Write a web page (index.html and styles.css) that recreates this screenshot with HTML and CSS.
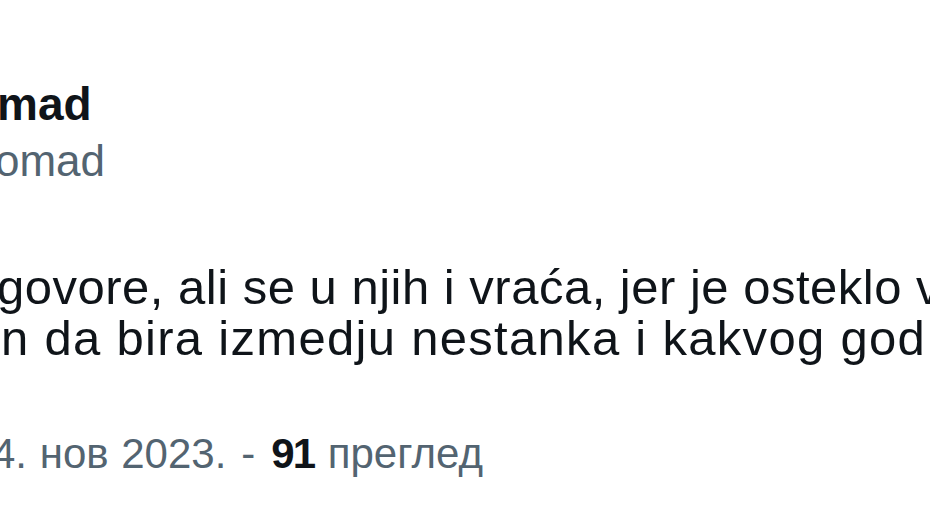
FILE: index.html
```html
<!DOCTYPE html>
<html lang="sr">
<head>
<meta charset="utf-8">
<title>Tweet</title>
<link rel="stylesheet" href="styles.css">
</head>
<body>
<div class="tweet">
  <div class="author">
    <div class="name">mad</div>
    <div class="handle">omad</div>
  </div>
  <div class="text">
    <div class="line line-1">govore, ali se u njih i vraća, jer je osteklo v</div>
    <div class="line line-2">n da bira izmedju nestanka i kakvog god</div>
  </div>
  <div class="meta"><span class="date">4. нов 2023.</span><span class="sep">-</span><span class="views"><b>91</b> преглед</span></div>
</div>
</body>
</html>
```

FILE: styles.css
```css
html, body {
  margin: 0;
  padding: 0;
  background: #ffffff;
}
body {
  width: 930px;
  height: 525px;
  overflow: hidden;
}
.tweet {
  width: 930px;
  height: 525px;
  overflow: hidden;
  padding-top: 78px;
  box-sizing: border-box;
  font-family: "Liberation Sans", Arial, sans-serif;
  color: #0f1419;
}
.author {
  display: flex;
  flex-direction: column;
  gap: 5px;
}
.name {
  font-size: 46px;
  line-height: 52px;
  font-weight: 700;
  margin-left: -3px;
  white-space: nowrap;
}
.handle {
  font-size: 44px;
  line-height: 52px;
  color: #536471;
  margin-left: -5px;
  white-space: nowrap;
}
.text {
  margin-top: 75px;
  font-size: 49px;
  line-height: 51px;
}
.line {
  white-space: nowrap;
}
.line-1 {
  margin-left: -3px;
  letter-spacing: 0.5px;
}
.line-2 {
  margin-left: 1px;
  letter-spacing: 1.3px;
}
.meta {
  margin-top: 66px;
  font-size: 42px;
  line-height: 48px;
  color: #536471;
  white-space: nowrap;
  margin-left: -8px;
}
.date {
  word-spacing: 1px;
}
.sep {
  margin: 0 16px 0 15px;
}
.meta b {
  color: #0f1419;
  font-weight: 700;
  letter-spacing: -2px;
  margin-right: 2px;
}
```
